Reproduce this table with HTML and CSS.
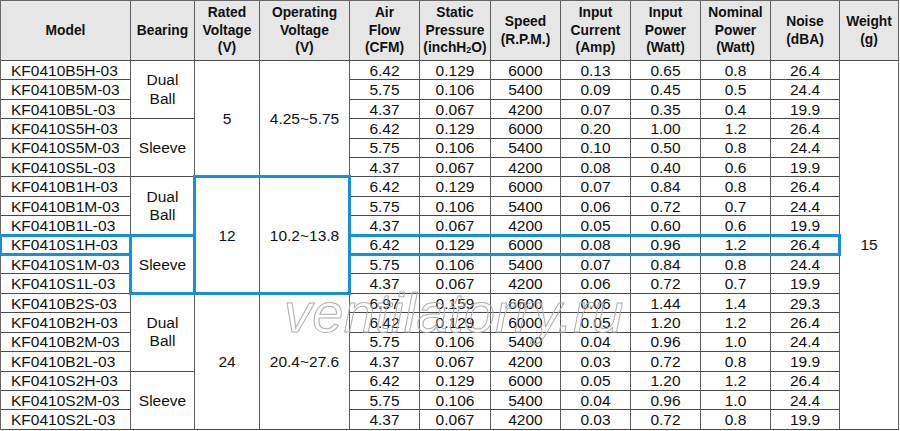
FILE: index.html
```html
<!DOCTYPE html>
<html>
<head>
<meta charset="utf-8">
<link rel="stylesheet" href="styles.css">
</head>
<body>
<div class="sheet">
<table class="spec">
<colgroup>
<col class="c-model"><col class="c-bear"><col class="c-rated"><col class="c-oper"><col class="c-air"><col class="c-static"><col class="c-speed"><col class="c-cur"><col class="c-pow"><col class="c-nom"><col class="c-noise"><col class="c-weight">
</colgroup>
<thead>
<tr>
<th>Model</th><th>Bearing</th><th>Rated<br>Voltage<br>(V)</th><th>Operating<br>Voltage<br>(V)</th><th>Air<br>Flow<br>(CFM)</th><th>Static<br>Pressure<br>(inchH<sub>2</sub>O)</th><th>Speed<br>(R.P.M.)</th><th>Input<br>Current<br>(Amp)</th><th>Input<br>Power<br>(Watt)</th><th>Nominal<br>Power<br>(Watt)</th><th>Noise<br>(dBA)</th><th>Weight<br>(g)</th>
</tr>
</thead>
<tbody>
<tr><td class="model">KF0410B5H-03</td><td rowspan="3" class="multi">Dual<br>Ball</td><td rowspan="6">5</td><td rowspan="6">4.25~5.75</td><td>6.42</td><td>0.129</td><td>6000</td><td>0.13</td><td>0.65</td><td>0.8</td><td>26.4</td><td rowspan="19">15</td></tr>
<tr><td class="model">KF0410B5M-03</td><td>5.75</td><td>0.106</td><td>5400</td><td>0.09</td><td>0.45</td><td>0.5</td><td>24.4</td></tr>
<tr><td class="model">KF0410B5L-03</td><td>4.37</td><td>0.067</td><td>4200</td><td>0.07</td><td>0.35</td><td>0.4</td><td>19.9</td></tr>
<tr><td class="model">KF0410S5H-03</td><td rowspan="3">Sleeve</td><td>6.42</td><td>0.129</td><td>6000</td><td>0.20</td><td>1.00</td><td>1.2</td><td>26.4</td></tr>
<tr><td class="model">KF0410S5M-03</td><td>5.75</td><td>0.106</td><td>5400</td><td>0.10</td><td>0.50</td><td>0.8</td><td>24.4</td></tr>
<tr><td class="model">KF0410S5L-03</td><td>4.37</td><td>0.067</td><td>4200</td><td>0.08</td><td>0.40</td><td>0.6</td><td>19.9</td></tr>
<tr><td class="model">KF0410B1H-03</td><td rowspan="3" class="multi">Dual<br>Ball</td><td rowspan="6" class="hl hl-t hl-b hl-l">12</td><td rowspan="6" class="hl hl-t hl-b hl-r">10.2~13.8</td><td>6.42</td><td>0.129</td><td>6000</td><td>0.07</td><td>0.84</td><td>0.8</td><td>26.4</td></tr>
<tr><td class="model">KF0410B1M-03</td><td>5.75</td><td>0.106</td><td>5400</td><td>0.06</td><td>0.72</td><td>0.7</td><td>24.4</td></tr>
<tr><td class="model">KF0410B1L-03</td><td>4.37</td><td>0.067</td><td>4200</td><td>0.05</td><td>0.60</td><td>0.6</td><td>19.9</td></tr>
<tr><td class="model hl hl-t hl-b hl-l hl-r">KF0410S1H-03</td><td rowspan="3" class="hl hl-t hl-b hl-l hl-r">Sleeve</td><td class="hl hl-t hl-b hl-l">6.42</td><td class="hl hl-t hl-b">0.129</td><td class="hl hl-t hl-b">6000</td><td class="hl hl-t hl-b">0.08</td><td class="hl hl-t hl-b">0.96</td><td class="hl hl-t hl-b">1.2</td><td class="hl hl-t hl-b hl-r">26.4</td></tr>
<tr><td class="model">KF0410S1M-03</td><td>5.75</td><td>0.106</td><td>5400</td><td>0.07</td><td>0.84</td><td>0.8</td><td>24.4</td></tr>
<tr><td class="model">KF0410S1L-03</td><td>4.37</td><td>0.067</td><td>4200</td><td>0.06</td><td>0.72</td><td>0.7</td><td>19.9</td></tr>
<tr><td class="model">KF0410B2S-03</td><td rowspan="4" class="multi">Dual<br>Ball</td><td rowspan="7">24</td><td rowspan="7">20.4~27.6</td><td>6.97</td><td>0.159</td><td>6600</td><td>0.06</td><td>1.44</td><td>1.4</td><td>29.3</td></tr>
<tr><td class="model">KF0410B2H-03</td><td>6.42</td><td>0.129</td><td>6000</td><td>0.05</td><td>1.20</td><td>1.2</td><td>26.4</td></tr>
<tr><td class="model">KF0410B2M-03</td><td>5.75</td><td>0.106</td><td>5400</td><td>0.04</td><td>0.96</td><td>1.0</td><td>24.4</td></tr>
<tr><td class="model">KF0410B2L-03</td><td>4.37</td><td>0.067</td><td>4200</td><td>0.03</td><td>0.72</td><td>0.8</td><td>19.9</td></tr>
<tr><td class="model">KF0410S2H-03</td><td rowspan="3">Sleeve</td><td>6.42</td><td>0.129</td><td>6000</td><td>0.05</td><td>1.20</td><td>1.2</td><td>26.4</td></tr>
<tr><td class="model">KF0410S2M-03</td><td>5.75</td><td>0.106</td><td>5400</td><td>0.04</td><td>0.96</td><td>1.0</td><td>24.4</td></tr>
<tr><td class="model">KF0410S2L-03</td><td>4.37</td><td>0.067</td><td>4200</td><td>0.03</td><td>0.72</td><td>0.8</td><td>19.9</td></tr>
</tbody>
</table>
<div class="watermark">ventilatorry.ru</div>
</div>
</body>
</html>
```

FILE: styles.css
```css
html, body {
  margin: 0;
  padding: 0;
  background: #ffffff;
}

.sheet {
  position: relative;
  width: 900px;
  height: 431px;
  overflow: hidden;
}

.spec {
  border-collapse: separate;
  border-spacing: 0;
  table-layout: fixed;
  width: 899px;
  border-top: 1px solid #666;
  border-left: 1px solid #666;
  font-family: "Liberation Sans", Arial, sans-serif;
  color: #111;
}

.c-model { width: 130px; }
.c-bear { width: 64px; }
.c-rated { width: 65px; }
.c-oper { width: 90px; }
.c-air { width: 70px; }
.c-static { width: 71px; }
.c-speed { width: 70px; }
.c-cur { width: 70px; }
.c-pow { width: 70px; }
.c-nom { width: 70px; }
.c-noise { width: 69px; }
.c-weight { width: 59px; }

.spec th,
.spec td {
  border-right: 1px solid #5c5c5c;
  border-bottom: 1px solid #4a4a4a;
  padding: 0;
  text-align: center;
  vertical-align: middle;
  box-sizing: border-box;
}

.spec th {
  height: 60px;
  background: #e6e6e6;
  font-size: 13.8px;
  font-weight: bold;
  line-height: 17.7px;
}

.spec th sub {
  font-size: 9px;
  vertical-align: -1px;
  line-height: 0;
}

.spec tbody tr {
  height: 19.42px;
}

.spec td {
  font-size: 15.5px;
  line-height: 17px;
}

.spec td.multi {
  line-height: 18.5px;
}

.spec td.model {
  text-align: left;
  padding-left: 10px;
}

.spec th:last-child,
.spec td[rowspan="19"] {
  border-right-color: #666;
}

.hl {
  position: relative;
}

.hl::after {
  content: "";
  position: absolute;
  top: -2px;
  left: -2px;
  right: -2px;
  bottom: -2px;
  border: 0 solid #1590dc;
  pointer-events: none;
}

.hl-t::after { border-top-width: 3px; }
.hl-b::after { border-bottom-width: 3px; }
.hl-l::after { border-left-width: 3px; }
.hl-r::after { border-right-width: 3px; }

.watermark {
  position: absolute;
  left: 284px;
  top: 285px;
  font-family: "Liberation Sans", Arial, sans-serif;
  font-style: italic;
  font-size: 56px;
  line-height: 56px;
  letter-spacing: 0.3px;
  color: transparent;
  -webkit-text-stroke: 1px #adadad;
  white-space: nowrap;
  pointer-events: none;
}
```
